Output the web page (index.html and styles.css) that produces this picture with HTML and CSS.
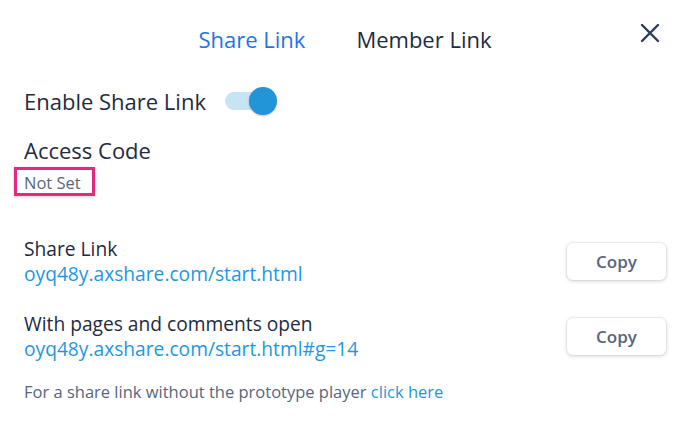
FILE: index.html
```html
<!DOCTYPE html>
<html>
<head>
<meta charset="utf-8">
<link rel="stylesheet" href="styles.css">
</head>
<body>
<div class="modal">
  <div class="header">
    <div class="tabs">
      <span class="tab active">Share Link</span>
      <span class="tab">Member Link</span>
    </div>
    <span class="close">
      <svg width="20" height="20" viewBox="0 0 20 20"><path d="M2 2 L18 18 M18 2 L2 18" stroke="#2b3d57" stroke-width="2.4" stroke-linecap="round" fill="none"/></svg>
    </span>
  </div>
  <div class="row enable">
    <span class="big">Enable Share Link</span>
    <span class="toggle"><span class="track"></span><span class="knob"></span></span>
  </div>
  <div class="big access">Access Code</div>
  <div class="notset"><span>Not Set</span></div>
  <div class="link-row first">
    <div class="link-text">
      <div class="label">Share Link</div>
      <div class="url">oyq48y.axshare.com/start.html</div>
    </div>
    <button class="copy">Copy</button>
  </div>
  <div class="link-row">
    <div class="link-text">
      <div class="label">With pages and comments open</div>
      <div class="url">oyq48y.axshare.com/start.html#g=14</div>
    </div>
    <button class="copy">Copy</button>
  </div>
  <div class="footer">For a share link without the prototype player <span class="link">click here</span></div>
</div>
</body>
</html>
```
FILE: styles.css
```css
* { box-sizing: border-box; }
html, body { margin: 0; padding: 0; background: #fff; }
body { font-family: "Open Sans", "Noto Sans", sans-serif; color: #1e2b40; }
.modal { width: 690px; height: 429px; padding: 0 24px; }
.header { position: relative; height: 78px; display: flex; justify-content: center; align-items: center; }
.tabs { display: flex; gap: 51px; font-size: 22px; }
.tab { color: #1e2b40; }
.tab.active { color: #1f72e8; }
.close { position: absolute; right: 6px; top: 23px; width: 20px; height: 20px; display: flex; }
.enable { display: flex; align-items: center; gap: 19px; height: 46px; }
.big { font-size: 22px; }
.toggle { position: relative; width: 52px; height: 28px; display: block; }
.track { position: absolute; left: 0; top: 5px; width: 44px; height: 18px; border-radius: 9px; background: #c7e4f5; }
.knob { position: absolute; right: 0; top: 0; width: 28px; height: 28px; border-radius: 50%; background: #2294d8; box-shadow: 0 1px 2px rgba(0,0,0,0.25); }
.access { margin-top: 10px; line-height: 32px; }
.notset { margin-left: -10px; margin-top: 1px; display: inline-block; border: 3px solid #e8277f; padding: 3px 11px 0 7px; box-shadow: 0 1px 3px rgba(0,0,0,0.2); }
.notset span { font-size: 16.5px; color: #56667d; line-height: 20px; display: block; }
.link-row { display: flex; justify-content: space-between; align-items: center; }
.link-row.first { margin-top: 40px; }
.link-row + .link-row { margin-top: 25px; }
.label { font-size: 19.2px; line-height: 25px; color: #1e2b40; }
.url { font-size: 19.2px; line-height: 25px; color: #1d97e2; }
.copy { width: 99px; height: 37px; border: none; border-radius: 6px; background: #fff; box-shadow: 0 1px 4px rgba(0,0,0,0.18), 0 0 0 1px rgba(0,0,0,0.04); font-family: inherit; font-size: 17px; font-weight: 600; color: #56667d; margin-right: 0; }
.footer { margin-top: 19px; font-size: 16.5px; color: #56667d; }
.link { color: #1d97e2; }
```
